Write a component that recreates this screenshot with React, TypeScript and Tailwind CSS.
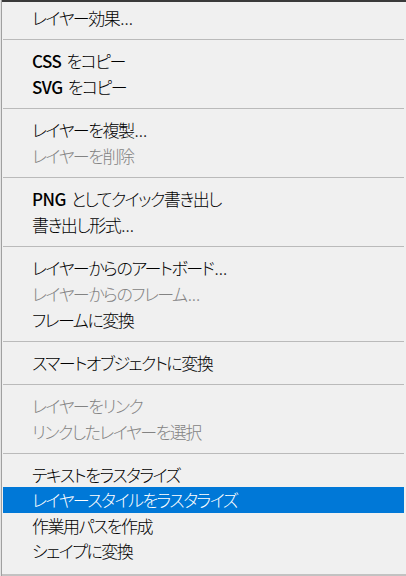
type Entry =
  | { kind: "item"; label: string; latin?: string; more?: boolean; disabled?: boolean; active?: boolean; short?: boolean }
  | { kind: "sep" };

const MENU: Entry[] = [
  { kind: "item", label: "レイヤー効果", more: true },
  { kind: "sep" },
  { kind: "item", latin: "CSS", label: "をコピー" },
  { kind: "item", latin: "SVG", label: "をコピー" },
  { kind: "sep" },
  { kind: "item", label: "レイヤーを複製", more: true },
  { kind: "item", label: "レイヤーを削除", disabled: true },
  { kind: "sep" },
  { kind: "item", latin: "PNG", label: "としてクイック書き出し" },
  { kind: "item", label: "書き出し形式", more: true },
  { kind: "sep" },
  { kind: "item", label: "レイヤーからのアートボード", more: true },
  { kind: "item", label: "レイヤーからのフレーム", more: true, disabled: true },
  { kind: "item", label: "フレームに変換" },
  { kind: "sep" },
  { kind: "item", label: "スマートオブジェクトに変換" },
  { kind: "sep" },
  { kind: "item", label: "レイヤーをリンク", disabled: true },
  { kind: "item", label: "リンクしたレイヤーを選択", disabled: true },
  { kind: "sep" },
  { kind: "item", label: "テキストをラスタライズ", short: true },
  { kind: "item", label: "レイヤースタイルをラスタライズ", active: true },
  { kind: "item", label: "作業用パスを作成", short: true },
  { kind: "item", label: "シェイプに変換", short: true },
];

function MenuRow({ entry }: { entry: Entry }) {
  if (entry.kind === "sep") {
    return (
      <div className="h-[17px] flex items-center">
        <div className="w-full h-px bg-[#bababa]" />
      </div>
    );
  }
  const color = entry.active
    ? "bg-[#0078d7] text-white"
    : entry.disabled
      ? "text-[#838383]"
      : "text-black";
  const height = entry.short ? "h-[25px] leading-[25px]" : "h-[26px] leading-[26px]";
  return (
    <div className={`pl-[29px] text-[17px] tracking-[-1.5px] font-light whitespace-nowrap [font-feature-settings:'palt'] ${height} ${color}`}>
      {entry.latin && (
        <span className="font-medium tracking-[-0.5px] mr-[5px]">{entry.latin}</span>
      )}
      {entry.label}
      {entry.more && <span className="tracking-[0px] ml-[1px]">...</span>}
    </div>
  );
}

export default function App() {
  return (
    <div className="w-[406px] h-[576px] bg-[#f0f0f0] flex overflow-hidden font-['Noto_Sans_CJK_JP','Noto_Sans',sans-serif]">
      {/* Left frame edge */}
      <div className="w-px shrink-0 bg-[#e3e3e3]" />
      <div className="w-px shrink-0 bg-[#a0a0a0]" />

      <div className="flex-1 flex flex-col">
        {/* Top edge */}
        <div className="h-[2px] bg-[#3a3a3a] shrink-0" />

        {/* Items */}
        <div className="flex-1 flex flex-col pt-[3px] pl-px pr-[2px]">
          {MENU.map((e, i) => (
            <MenuRow key={i} entry={e} />
          ))}
        </div>

        {/* Bottom edge */}
        <div className="h-[2px] bg-[#c2c2c2] shrink-0" />
      </div>
    </div>
  );
}
